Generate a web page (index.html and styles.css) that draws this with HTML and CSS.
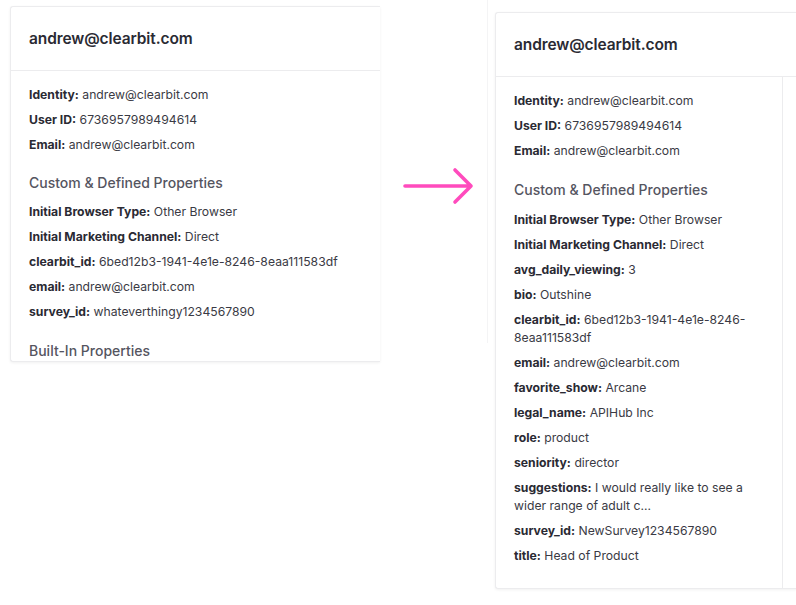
FILE: index.html
```html
<!DOCTYPE html>
<html>
<head>
<meta charset="utf-8">
<link rel="stylesheet" href="styles.css">
</head>
<body>
<div class="stage">
  <section class="card card-before">
    <header class="card-head"><h1>andrew@clearbit.com</h1></header>
    <div class="card-body">
      <p class="row"><b>Identity:</b> andrew@clearbit.com</p>
      <p class="row"><b>User ID:</b> 6736957989494614</p>
      <p class="row"><b>Email:</b> andrew@clearbit.com</p>
      <h2 class="group">Custom &amp; Defined Properties</h2>
      <p class="row"><b>Initial Browser Type:</b> Other Browser</p>
      <p class="row"><b>Initial Marketing Channel:</b> Direct</p>
      <p class="row"><b>clearbit_id:</b> 6bed12b3-1941-4e1e-8246-8eaa111583df</p>
      <p class="row"><b>email:</b> andrew@clearbit.com</p>
      <p class="row"><b>survey_id:</b> whateverthingy1234567890</p>
      <h2 class="group group-builtin">Built-In Properties</h2>
    </div>
  </section>

  <div class="arrow">
    <svg width="74" height="40" viewBox="0 0 74 40">
      <path d="M2 20 H68 M52 4 L68 20 L52 36" fill="none" stroke="#ff4bbd" stroke-width="3.6" stroke-linecap="round" stroke-linejoin="round"/>
    </svg>
  </div>

  <div class="after-panel">
    <section class="card card-after">
      <header class="card-head"><h1>andrew@clearbit.com</h1></header>
      <div class="card-cols">
        <div class="card-body">
          <p class="row"><b>Identity:</b> andrew@clearbit.com</p>
          <p class="row"><b>User ID:</b> 6736957989494614</p>
          <p class="row"><b>Email:</b> andrew@clearbit.com</p>
          <h2 class="group">Custom &amp; Defined Properties</h2>
          <p class="row"><b>Initial Browser Type:</b> Other Browser</p>
          <p class="row"><b>Initial Marketing Channel:</b> Direct</p>
          <p class="row"><b>avg_daily_viewing:</b> 3</p>
          <p class="row"><b>bio:</b> Outshine</p>
          <p class="row"><b>clearbit_id:</b> 6bed12b3-1941-4e1e-8246-8eaa111583df</p>
          <p class="row"><b>email:</b> andrew@clearbit.com</p>
          <p class="row"><b>favorite_show:</b> Arcane</p>
          <p class="row"><b>legal_name:</b> APIHub Inc</p>
          <p class="row"><b>role:</b> product</p>
          <p class="row"><b>seniority:</b> director</p>
          <p class="row"><b>suggestions:</b> I would really like to see a wider range of adult c...</p>
          <p class="row"><b>survey_id:</b> NewSurvey1234567890</p>
          <p class="row"><b>title:</b> Head of Product</p>
        </div>
        <div class="card-side"></div>
      </div>
    </section>
  </div>
</div>
</body>
</html>
```

FILE: styles.css
```css
* { box-sizing: border-box; }
html, body { margin: 0; padding: 0; background: #fff; }
body {
  font-family: "Inter", "Liberation Sans", sans-serif;
  color: #2c2c35;
  width: 796px;
  height: 605px;
  overflow: hidden;
}
.stage {
  display: flex;
  align-items: flex-start;
}
.card {
  background: #fff;
  border: 1px solid #ececee;
  border-radius: 3px;
  box-shadow: 0 1px 3px rgba(0,0,0,0.06);
}
.card-before {
  margin-left: 10px;
  margin-top: 6px;
  width: 370px;
  height: 356px;
  overflow: hidden;
  border-right: none;
  border-top-right-radius: 0;
  border-bottom-right-radius: 0;
  flex-shrink: 0;
}
.card-head {
  height: 64px;
  border-bottom: 1px solid #ececee;
  display: flex;
  align-items: center;
  padding: 0 18px;
}
.card-head h1 {
  margin: 0;
  font-size: 15.5px;
  font-weight: 600;
  color: #2a2a33;
  letter-spacing: -0.1px;
}
.card-body {
  padding: 15px 18px 14px;
}
.row {
  margin: 0 0 7px;
  font-size: 12.2px;
  line-height: 18px;
  color: #3a3a44;
}
.row b {
  font-weight: 700;
  color: #2a2a33;
}
.group {
  margin: 20px 0 11px;
  font-size: 14px;
  font-weight: 500;
  line-height: 18px;
  color: #55555f;
}
.group-builtin {
  margin-top: 21px;
}
.arrow {
  margin-left: 23px;
  margin-top: 166px;
  width: 74px;
  height: 40px;
  flex-shrink: 0;
}
.arrow svg { display: block; }
.after-panel {
  margin-left: 10px;
  height: 343px;
  border-left: 1px solid #f4f4f5;
  padding: 12px 0 0 7px;
  flex: 1;
  min-width: 0;
}
.card-after {
  width: 302px;
  border-right: none;
  border-top-right-radius: 0;
  border-bottom-right-radius: 0;
}
.card-after .group {
  margin-top: 21px;
  margin-bottom: 12px;
}
.card-cols {
  display: flex;
}
.card-cols .card-body {
  width: 287px;
  border-right: 1px solid #ececee;
  padding-bottom: 16px;
}
.card-side { flex: 1; }
```
